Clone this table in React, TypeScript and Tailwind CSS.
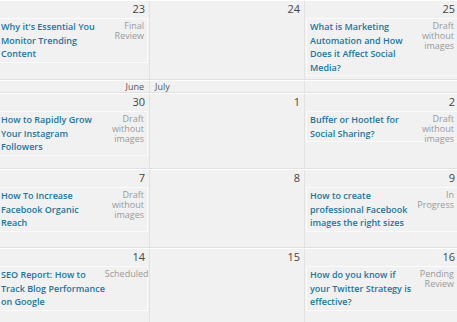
import React from 'react'

type Post = { title: string; status: string }
type Day = { date: number; post?: Post }

const weeks: { h: string; days: Day[] }[] = [
  {
    h: 'h-[80px]',
    days: [
      { date: 23, post: { title: "Why it's Essential You Monitor Trending Content", status: 'Final Review' } },
      { date: 24 },
      { date: 25, post: { title: 'What is Marketing Automation and How Does it Affect Social Media?', status: 'Draft without images' } },
    ],
  },
]

const weeksAfter: { h: string; days: Day[] }[] = [
  {
    h: 'h-[76px]',
    days: [
      { date: 30, post: { title: 'How to Rapidly Grow Your Instagram Followers', status: 'Draft without images' } },
      { date: 1 },
      { date: 2, post: { title: 'Buffer or Hootlet for Social Sharing?', status: 'Draft without images' } },
    ],
  },
  {
    h: 'h-[79px]',
    days: [
      { date: 7, post: { title: 'How To Increase Facebook Organic Reach', status: 'Draft without images' } },
      { date: 8 },
      { date: 9, post: { title: 'How to create professional Facebook images the right sizes', status: 'In Progress' } },
    ],
  },
  {
    h: 'h-[80px]',
    days: [
      // keep this line together, the font here runs a hair wider than the original
      { date: 14, post: { title: 'SEO Report: How to Track\u00a0Blog\u00a0Performance on Google', status: 'Scheduled' } },
      { date: 15 },
      { date: 16, post: { title: 'How do you know if your Twitter Strategy is effective?', status: 'Pending Review' } },
    ],
  },
]

function Cell({ day }: { day: Day }) {
  return (
    <div className="border-r border-[#e2e2e2] px-[1px]">
      <div className="h-[15px] pt-[1px] pr-[3px] text-right text-[11px] leading-[13px] text-[#444]">{day.date}</div>
      {day.post && (
        <div className="mt-[2px] flex border border-[#fbfbfb] py-[1px] pl-[3px] pr-[3px]">
          <div className="w-[106px] text-[9px] font-semibold leading-[13.5px] text-[#21759b]">{day.post.title}</div>
          <div className="ml-auto h-0 w-[40px] pt-[1px] text-right text-[9px] leading-[10px] text-[#999]">
            {day.post.status}
          </div>
        </div>
      )}
    </div>
  )
}

function Week({ h, days }: { h: string; days: Day[] }) {
  return (
    <div className={`grid grid-cols-[154px_155px_155px] border-t border-white border-b border-b-[#e0e0e0] ${h}`}>
      {days.map((d) => (
        <Cell key={d.date} day={d} />
      ))}
    </div>
  )
}

export default function App() {
  return (
    <div className="h-[322px] w-[457px] overflow-hidden bg-[#f1f1f1] font-['Open_Sans',sans-serif]">
      <div className="-ml-[4px] w-[464px]">
        {weeks.map((w) => (
          <Week key={w.days[0].date} h={w.h} days={w.days} />
        ))}
        <div className="grid h-[13px] grid-cols-[154px_155px_155px] border-t border-white border-b border-b-[#e0e0e0] text-[9px] leading-[11px] text-[#555]">
          <div className="border-r border-[#e2e2e2] pr-[5px] text-right">June</div>
          <div className="border-r border-[#e2e2e2] pl-[5px]">July</div>
          <div className="border-r border-[#e2e2e2]" />
        </div>
        {weeksAfter.map((w) => (
          <Week key={w.days[0].date} h={w.h} days={w.days} />
        ))}
      </div>
    </div>
  )
}
